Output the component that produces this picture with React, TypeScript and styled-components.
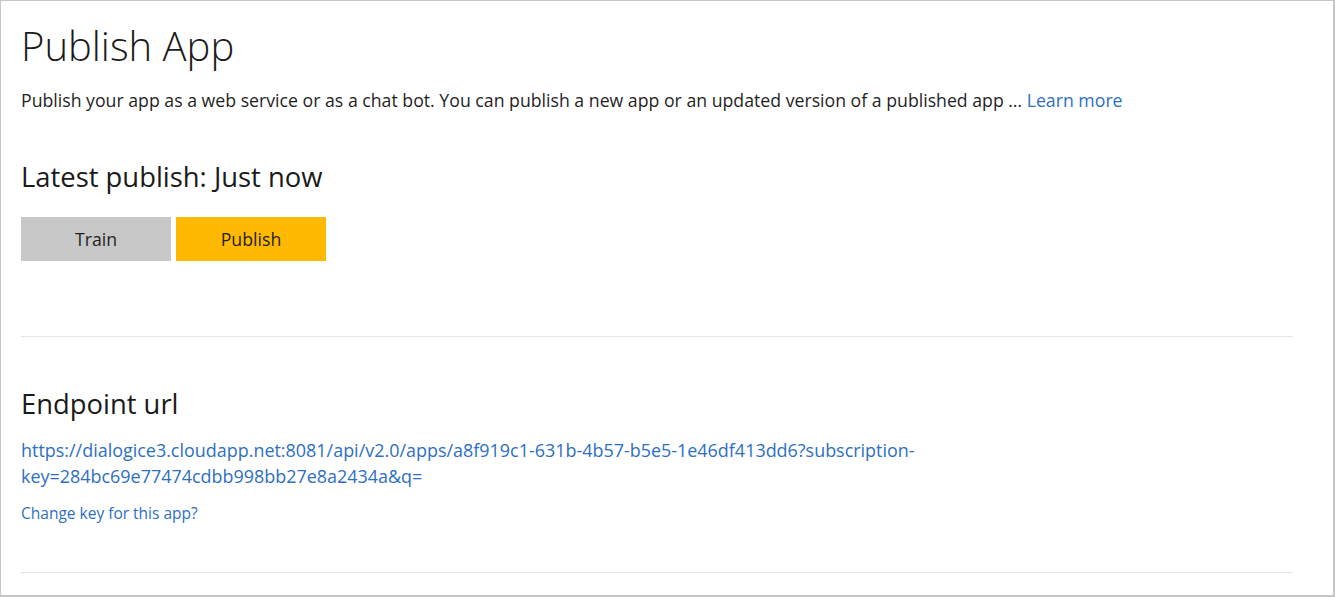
import React from "react";
import styled, { createGlobalStyle } from "styled-components";

const GlobalStyle = createGlobalStyle`
  html, body { margin: 0; padding: 0; background: #ffffff; }
  body { font-family: "Open Sans", "Noto Sans", sans-serif; color: #1f1f1f; }
  * { box-sizing: border-box; }
`;

const Frame = styled.div`
  width: 1335px;
  height: 597px;
  border: 1px solid #c6c6c6;
  border-right-width: 2px;
  border-bottom-width: 2px;
  padding: 0 40px 0 20px;
  overflow: hidden;
`;

const Title = styled.h1`
  margin: 18px 0 0;
  font-size: 40px;
  font-weight: 300;
  line-height: 54px;
  color: #1a1a1a;
`;

const Description = styled.p`
  margin: 15px 0 0;
  font-size: 17.7px;
  line-height: 24px;
  color: #1f1f1f;
`;

const Link = styled.a`
  color: #2d6fc3;
  text-decoration: none;
`;

const SectionTitle = styled.h2`
  margin: 0;
  font-size: 27.4px;
  font-weight: 400;
  line-height: 36px;
  color: #1a1a1a;
`;

const PublishSection = styled.section`
  margin-top: 47px;
  margin-bottom: 75px;
`;

const ButtonRow = styled.div`
  display: flex;
  gap: 5px;
  margin-top: 22px;
`;

const Button = styled.button<{ $primary?: boolean }>`
  width: 150px;
  height: 44px;
  border: none;
  padding: 0;
  font-family: inherit;
  font-size: 17.7px;
  color: #1f1f1f;
  background: ${(p) => (p.$primary ? "#ffb900" : "#c8c8c8")};
  cursor: pointer;
`;

const Divider = styled.hr`
  border: none;
  border-top: 1px solid #e6e6e6;
  margin: 0;
`;

const EndpointSection = styled.section`
  margin-top: 49px;
  margin-bottom: 49px;
`;

const Url = styled.div`
  margin-top: 15px;
  width: 940px;
  font-size: 17.95px;
  line-height: 26px;
`;

const ChangeKey = styled.div`
  margin-top: 14px;
  font-size: 15.5px;
  line-height: 20px;
`;

export default function App() {
  return (
    <>
      <GlobalStyle />
      <Frame>
        <Title>Publish App</Title>
        <Description>
          Publish your app as a web service or as a chat bot. You can publish a new app or an updated version of a published app …{" "}
          <Link href="#">Learn more</Link>
        </Description>
        <PublishSection>
          <SectionTitle>Latest publish: Just now</SectionTitle>
          <ButtonRow>
            <Button>Train</Button>
            <Button $primary>Publish</Button>
          </ButtonRow>
        </PublishSection>
        <Divider />
        <EndpointSection>
          <SectionTitle>Endpoint url</SectionTitle>
          <Url>
            <Link href="#">
              https://dialogice3.cloudapp.net:8081/api/v2.0/apps/a8f919c1-631b-4b57-b5e5-1e46df413dd6?subscription-key=284bc69e77474cdbb998bb27e8a2434a&amp;q=
            </Link>
          </Url>
          <ChangeKey>
            <Link href="#">Change key for this app?</Link>
          </ChangeKey>
        </EndpointSection>
        <Divider />
      </Frame>
    </>
  );
}
